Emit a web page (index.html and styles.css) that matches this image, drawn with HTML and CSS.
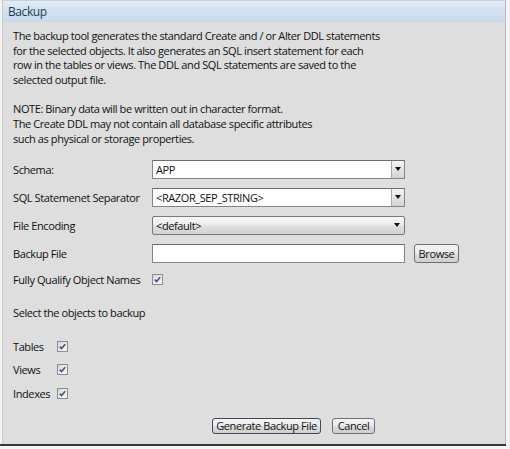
FILE: index.html
```html
<!DOCTYPE html>
<html>
<head>
<meta charset="utf-8">
<link rel="stylesheet" href="styles.css">
</head>
<body>
<div class="window">
  <div class="panel">
    <div class="header">Backup</div>
    <div class="content">
      <p class="desc">The backup tool generates the standard Create and / or Alter DDL statements<br>for the selected objects. It also generates an SQL insert statement for each<br>row in the tables or views. The DDL and SQL statements are saved to the<br>selected output file.</p>
      <p class="desc note">NOTE: Binary data will be written out in character format.<br>The Create DDL may not contain all database specific attributes<br>such as physical or storage properties.</p>

      <div class="form">
        <label class="lbl">Schema:</label>
        <div class="select"><span class="val">APP</span><span class="drop"><span class="tri"></span></span></div>

        <label class="lbl">SQL Statemenet Separator</label>
        <div class="select"><span class="val">&lt;RAZOR_SEP_STRING&gt;</span><span class="drop"><span class="tri"></span></span></div>

        <label class="lbl">File Encoding</label>
        <div class="select combo"><span class="val">&lt;default&gt;</span><span class="drop plain"><span class="tri"></span></span></div>

        <label class="lbl">Backup File</label>
        <div class="filerow"><div class="input"></div><button class="btn browse">Browse</button></div>

        <label class="lbl">Fully Qualify Object Names</label>
        <div class="cbwrap"><span class="cb"><svg viewBox="0 0 9 9" width="9" height="9"><path d="M1.8 4.6 L3.6 6.6 L7.2 2.2" fill="none" stroke="#3f5a86" stroke-width="1.6"/></svg></span></div>
      </div>

      <p class="select-title">Select the objects to backup</p>

      <div class="objects">
        <label class="lbl">Tables</label>
        <span class="cb"><svg viewBox="0 0 9 9" width="9" height="9"><path d="M1.8 4.6 L3.6 6.6 L7.2 2.2" fill="none" stroke="#3f5a86" stroke-width="1.6"/></svg></span>
        <label class="lbl">Views</label>
        <span class="cb"><svg viewBox="0 0 9 9" width="9" height="9"><path d="M1.8 4.6 L3.6 6.6 L7.2 2.2" fill="none" stroke="#3f5a86" stroke-width="1.6"/></svg></span>
        <label class="lbl">Indexes</label>
        <span class="cb"><svg viewBox="0 0 9 9" width="9" height="9"><path d="M1.8 4.6 L3.6 6.6 L7.2 2.2" fill="none" stroke="#3f5a86" stroke-width="1.6"/></svg></span>
      </div>

      <div class="actions">
        <button class="btn default">Generate Backup File</button>
        <button class="btn cancel">Cancel</button>
      </div>
    </div>
  </div>
</div>
</body>
</html>
```
FILE: styles.css
```css
* { box-sizing: border-box; }
html, body {
  margin: 0;
  padding: 0;
  background: #f3f3f3;
  width: 510px;
  height: 449px;
  overflow: hidden;
}
body {
  font-family: "Open Sans", "Noto Sans", sans-serif;
  font-size: 11px;
  letter-spacing: -0.4px;
  color: #111;
}
.window {
  width: 506px;
  height: 446px;
  border-bottom: 2px solid #383838;
  padding-left: 2px;
}
.panel {
  height: 444px;
  width: 504px;
  background: #dedede;
  border-left: 1px solid #c9c9c9;
  border-right: 1px solid #b9b9b9;
}
.header {
  height: 22px;
  line-height: 21px;
  padding-left: 5px;
  font-size: 12px;
  color: #233a55;
  background: linear-gradient(#e4edf6 0%, #d6e4f1 30%, #c6d9ec 100%);
  border-top: 1px solid #c5d3e0;
}
.content {
  padding: 7px 0 0 10px;
}
.desc {
  margin: 0;
  line-height: 14.7px;
}
.note {
  margin-top: 14.5px;
}
.form {
  margin-top: 13.5px;
  display: grid;
  grid-template-columns: 139px auto;
  grid-template-rows: repeat(4, 19px) 15px;
  row-gap: 9px;
  align-items: center;
}
.lbl { white-space: nowrap; }
.select {
  width: 253px;
  height: 19px;
  background: #fff;
  border: 1px solid #858585;
  border-top-color: #6e6e6e;
  display: flex;
  align-items: stretch;
}
.select .val {
  flex: 1;
  padding-left: 3px;
  line-height: 17px;
}
.drop {
  width: 13px;
  border-left: 1px solid #a8a8a8;
  background: linear-gradient(#f4f4f4, #d3d3d3);
  display: flex;
  align-items: center;
  justify-content: center;
}
.tri {
  width: 0;
  height: 0;
  border-left: 3.5px solid transparent;
  border-right: 3.5px solid transparent;
  border-top: 4px solid #111;
}
.combo {
  border-radius: 2px;
  border-color: #7a7a7a;
  background: linear-gradient(#f7f7f7 0%, #ececec 45%, #dedede 55%, #d2d2d2 100%);
}
.combo .drop.plain {
  border-left: none;
  background: none;
  width: 15px;
}
.filerow {
  display: flex;
  align-items: center;
  gap: 9px;
}
.input {
  width: 253px;
  height: 19px;
  background: #fff;
  border: 1px solid #858585;
  border-top-color: #6e6e6e;
}
.btn {
  font-family: inherit;
  font-size: 11px;
  letter-spacing: -0.4px;
  color: #111;
  height: 19px;
  padding: 0;
  white-space: nowrap;
  border: 1px solid #707070;
  border-radius: 3px;
  background: linear-gradient(#f4f4f4 0%, #ebebeb 48%, #dcdcdc 52%, #cfcfcf 100%);
  line-height: 15px;
}
.browse { width: 45px; }
.cbwrap { display: flex; align-items: center; height: 15px; }
.cb {
  width: 11px;
  height: 11px;
  border: 1px solid #8c8c8c;
  background: linear-gradient(135deg, #d8d8d8, #f8f8f8);
  display: flex;
  align-items: center;
  justify-content: center;
}
.select-title {
  margin: 19px 0 0;
  line-height: 14px;
}
.objects {
  margin-top: 19px;
  display: grid;
  grid-template-columns: 44px auto;
  grid-auto-rows: 15px;
  row-gap: 8.5px;
  align-items: center;
  justify-items: start;
}
.actions {
  margin-top: 17px;
  display: flex;
  gap: 11px;
  padding-left: 199px;
}
.actions .btn { height: 16px; line-height: 13px; }
.default {
  border-color: #3c4a5e;
  width: 109px;
}
.cancel { width: 43px; }
```
